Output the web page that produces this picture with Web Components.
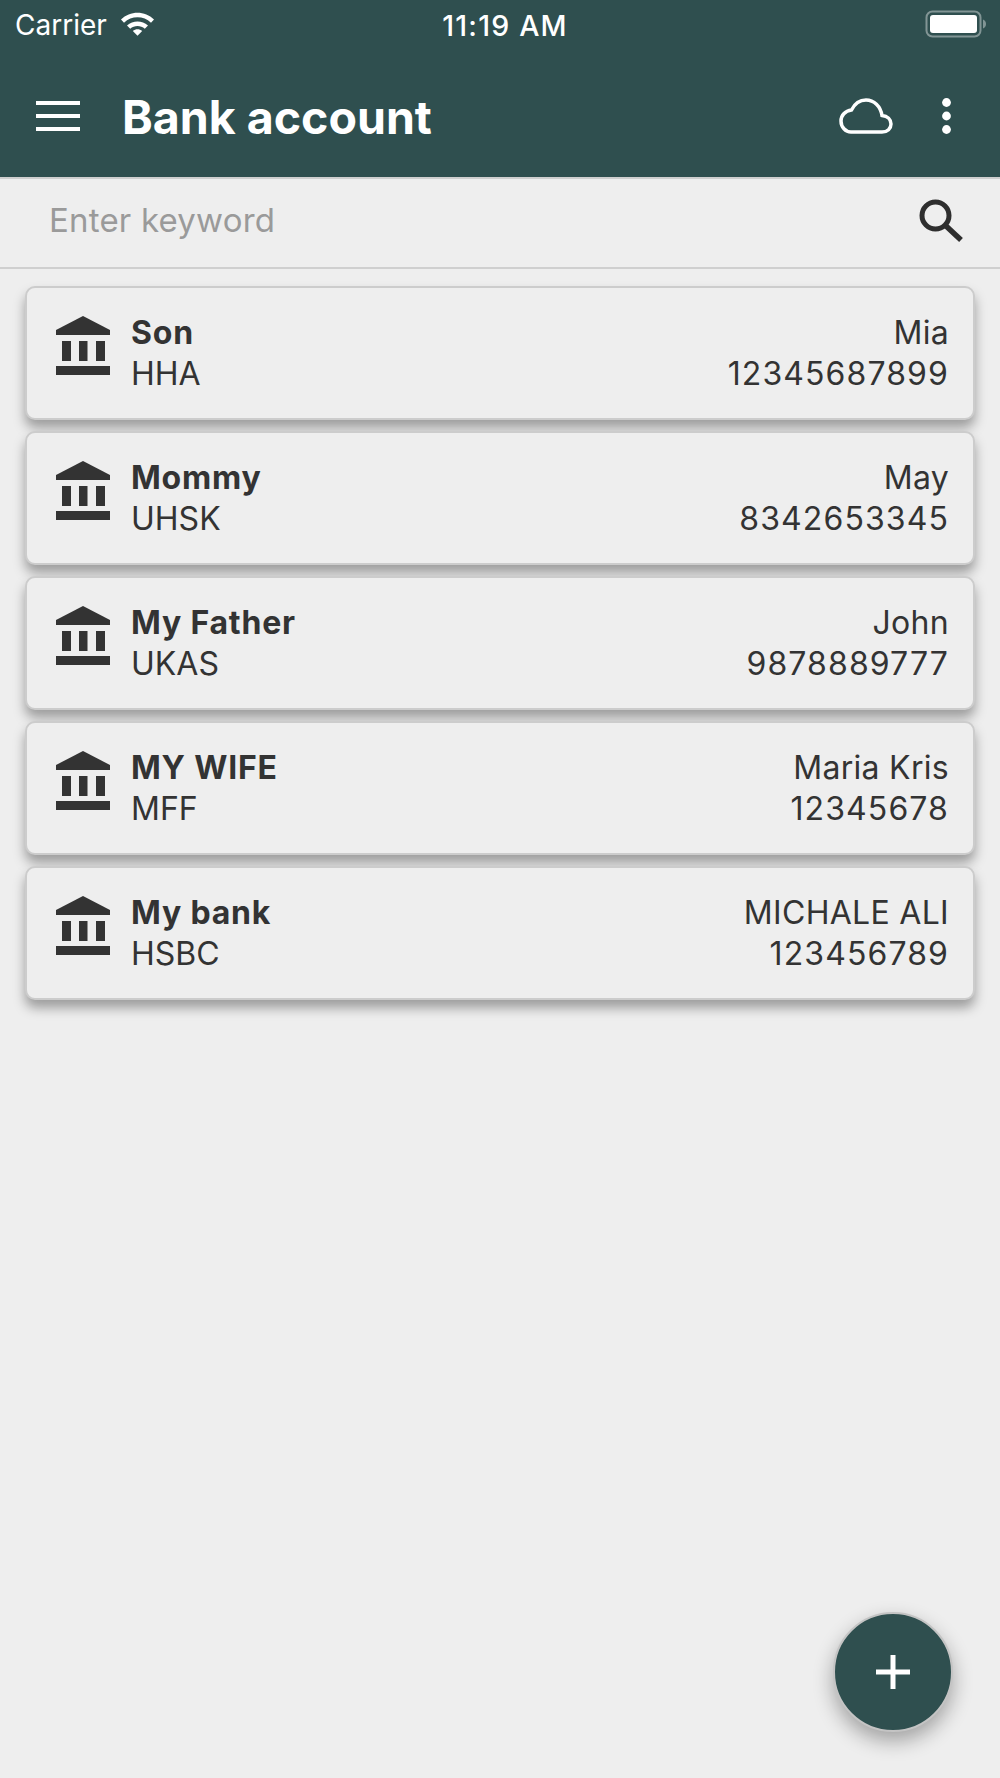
<!DOCTYPE html>
<html>
<head>
<meta charset="utf-8">
<title>Bank account</title>
<style>
    html, body { margin: 0; padding: 0; height: 100%; }
    body { background: #eeeeee; font-family: Inter, "Liberation Sans", sans-serif; color: #333; overflow: hidden; }
    .cards { display: flex; flex-direction: column; gap: 11px; padding: 17px 25px 0; }
</style>
</head>
<body>
<status-bar></status-bar>
<app-header>Bank account</app-header>
<search-bar></search-bar>
<div class="cards">
    <bank-card><span slot="name">Son</span><span slot="bank">HHA</span><span slot="holder">Mia</span><span slot="number">12345687899</span></bank-card>
    <bank-card><span slot="name">Mommy</span><span slot="bank">UHSK</span><span slot="holder">May</span><span slot="number">8342653345</span></bank-card>
    <bank-card><span slot="name">My Father</span><span slot="bank">UKAS</span><span slot="holder">John</span><span slot="number">9878889777</span></bank-card>
    <bank-card><span slot="name">MY WIFE</span><span slot="bank">MFF</span><span slot="holder">Maria Kris</span><span slot="number">12345678</span></bank-card>
    <bank-card><span slot="name">My bank</span><span slot="bank">HSBC</span><span slot="holder">MICHALE ALI</span><span slot="number">123456789</span></bank-card>
</div>
<add-fab></add-fab>

<script>
class StatusBar extends HTMLElement {
    constructor() {
        super();
        this.attachShadow({ mode: 'open' });
        this.shadowRoot.innerHTML = `
            <style>
                :host { display: grid; grid-template-columns: 1fr auto 1fr; align-items: center; height: 48px; padding: 2px 13px 0 15px; background: #2f4f4f; color: #fff; font-size: 28px; box-sizing: border-box; }
                .left { display: flex; align-items: center; gap: 13px; }
                .right { display: flex; justify-content: flex-end; }
                .time { font-weight: 500; font-size: 28.500px; letter-spacing: 1.200px; margin-left: 8px; }
                svg { display: block; }
            </style>
            <div class="left">
                <span>Carrier</span>
                <svg style="margin-top:-4px" width="35" height="26" viewBox="0 0 35 26">
                    <path d="M1 9.500C10 .5 25 .5 34 9.500l-3 3.200C23.500 5.500 11.500 5.500 4 12.700z" fill="#fff"/>
                    <path d="M7 15.500c6-5.500 15-5.500 21 0l-3.200 3.200c-4-3.500-10.600-3.500-14.600 0z" fill="#fff"/>
                    <path d="M12.800 21c2.800-2.300 6.600-2.300 9.400 0l-4.700 4.800z" fill="#fff"/>
                </svg>
            </div>
            <span class="time">11:19 AM</span>
            <div class="right">
                <svg style="margin-top:-2px" width="62" height="28" viewBox="0 0 62 28">
                    <rect x="1.500" y="1.500" width="54" height="25" rx="6" fill="none" stroke="#fff" stroke-opacity=".4" stroke-width="2"/>
                    <rect x="5" y="5" width="47" height="18" rx="3" fill="#fff"/>
                    <path d="M58 9.500c2 .5 3 2.500 3 4.500s-1 4-3 4.500z" fill="#fff" fill-opacity=".4"/>
                </svg>
            </div>`;
    }
}

class AppHeader extends HTMLElement {
    constructor() {
        super();
        this.attachShadow({ mode: 'open' });
        this.shadowRoot.innerHTML = `
            <style>
                :host { display: flex; align-items: center; height: 131px; padding: 8px 49px 0 36px; box-sizing: border-box; background: #2f4f4f; color: #fff; border-bottom: 2px solid #cfcfcf; }
                .title { font-size: 46.500px; font-weight: 700; margin-left: 42px; flex: 1; }
                svg { display: block; }
                .menu { margin-top: -2px; }
            </style>
            <svg class="menu" width="44" height="30" viewBox="0 0 44 30" fill="#fff">
                <rect y="0" width="44" height="4"/><rect y="13" width="44" height="4"/><rect y="26" width="44" height="4"/>
            </svg>
            <div class="title"><slot></slot></div>
            <svg style="margin-top:-2px" width="54" height="36" viewBox="0 0 54 36" fill="none" stroke="#fff" stroke-width="3.500">
                <path d="M12 34H43C48.500 34 52 30.500 52 26C52 21.500 48.500 18 43 17.500C41.500 8 35 2 27 2C20 2 15.500 6 12.500 12C6 12.800 2 17.500 2 23C2 29 6.500 34 12 34Z"/>
            </svg>
            <svg style="margin:-2px 0 0 49px" width="9" height="36" viewBox="0 0 9 36" fill="#fff">
                <circle cx="4.500" cy="4.500" r="4.400"/><circle cx="4.500" cy="18" r="4.400"/><circle cx="4.500" cy="31.500" r="4.400"/>
            </svg>`;
    }
}

class SearchBar extends HTMLElement {
    constructor() {
        super();
        this.attachShadow({ mode: 'open' });
        this.shadowRoot.innerHTML = `
            <style>
                :host { display: flex; align-items: center; justify-content: space-between; height: 90px; padding: 0 37px 0 49px; box-sizing: border-box; border-bottom: 2px solid #cfcfcf; background: #eee; }
                .hint { font-size: 33px; letter-spacing: .2px; color: #9a9a9a; margin-top: -7px; }
                svg { display: block; margin-top: -4px; }
            </style>
            <span class="hint">Enter keyword</span>
            <svg width="44" height="44" viewBox="0 0 44 44" fill="none" stroke="#2e2e2e" stroke-width="5">
                <circle cx="16.500" cy="16.500" r="13.500"/>
                <path d="M26.500 26.500L42 41" stroke-width="5.500"/>
            </svg>`;
    }
}

class BankCard extends HTMLElement {
    constructor() {
        super();
        this.attachShadow({ mode: 'open' });
        this.shadowRoot.innerHTML = `
            <style>
                :host { display: flex; align-items: flex-start; height: 134px; padding: 24px 24px 0 29px; box-sizing: border-box; background: #eee; border: 2px solid #cccccc; border-radius: 10px; box-shadow: 0 8px 12px rgba(0,0,0,.34); font-size: 32px; line-height: 41px; color: #333; }
                svg { display: block; flex: none; margin: 4px 21px 0 0; }
                .col { display: flex; flex-direction: column; }
                .name { font-weight: 700; letter-spacing: .8px; }
                .right { margin-left: auto; text-align: right; letter-spacing: .3px; }
                .number { letter-spacing: 1.100px; }
            </style>
            <svg width="54" height="59" viewBox="0 0 54 59" fill="#333">
                <path d="M27 0L54 14V19H0V14Z"/>
                <rect x="6" y="25" width="9" height="20"/>
                <rect x="23" y="25" width="8.500" height="20"/>
                <rect x="40" y="25" width="9" height="20"/>
                <rect y="50" width="54" height="9"/>
            </svg>
            <div class="col">
                <span class="name"><slot name="name"></slot></span>
                <span><slot name="bank"></slot></span>
            </div>
            <div class="col right">
                <span><slot name="holder"></slot></span>
                <span class="number"><slot name="number"></slot></span>
            </div>`;
    }
}

class AddFab extends HTMLElement {
    constructor() {
        super();
        this.attachShadow({ mode: 'open' });
        this.shadowRoot.innerHTML = `
            <style>
                :host { position: absolute; left: 833px; top: 1612px; width: 120px; height: 120px; box-sizing: border-box; display: flex; align-items: center; justify-content: center; border-radius: 50%; background: #2f4f4f; border: 2px solid #c4c4c4; box-shadow: 0 9px 20px rgba(0,0,0,.32); }
                svg { display: block; }
            </style>
            <svg width="34" height="34" viewBox="0 0 34 34" fill="#fff">
                <rect x="14.500" width="5" height="34"/><rect y="14.500" width="34" height="5"/>
            </svg>`;
    }
}

customElements.define('status-bar', StatusBar);
customElements.define('app-header', AppHeader);
customElements.define('search-bar', SearchBar);
customElements.define('bank-card', BankCard);
customElements.define('add-fab', AddFab);
</script>
</body>
</html>
